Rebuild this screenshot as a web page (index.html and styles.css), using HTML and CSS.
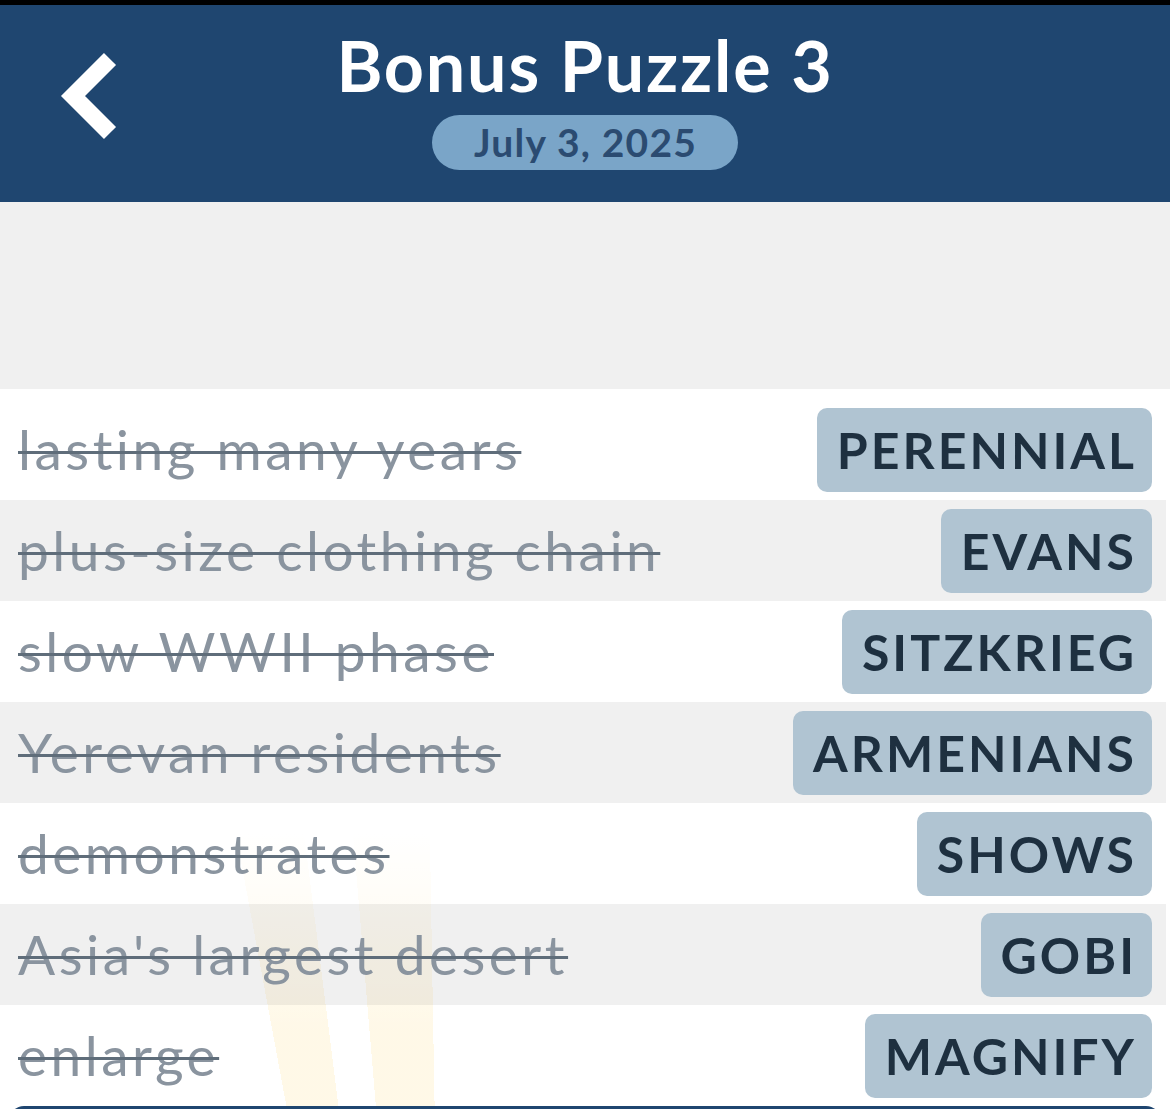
FILE: index.html
```html
<!DOCTYPE html>
<html>

<head>
    <meta charset="UTF-8">
    <title>Bonus Puzzle 3</title>
    <link rel="stylesheet" href="styles.css">
</head>

<body>
    <div class="statusbar"></div>

    <header class="topbar">
        <a class="back" href="#">
            <svg width="66" height="96" viewBox="0 0 66 96">
                <polyline points="58,11 21,48 58,85" fill="none" stroke="#fff" stroke-width="17" stroke-linejoin="miter" stroke-linecap="butt" />
            </svg>
        </a>
        <div class="heading">
            <h1 class="title">Bonus Puzzle 3</h1>
            <span class="date">July 3, 2025</span>
        </div>
        <div></div>
    </header>

    <div class="spacer"></div>

    <ul class="clues">
        <li class="clue"><span class="clue-text">lasting many years</span><span class="answer">PERENNIAL</span></li>
        <li class="clue"><span class="clue-text">plus-size clothing chain</span><span class="answer">EVANS</span></li>
        <li class="clue"><span class="clue-text">slow WWII phase</span><span class="answer">SITZKRIEG</span></li>
        <li class="clue"><span class="clue-text">Yerevan residents</span><span class="answer">ARMENIANS</span></li>
        <li class="clue"><span class="clue-text">demonstrates</span><span class="answer">SHOWS</span></li>
        <li class="clue"><span class="clue-text">Asia's largest desert</span><span class="answer">GOBI</span></li>
        <li class="clue"><span class="clue-text">enlarge</span><span class="answer">MAGNIFY</span></li>
    </ul>

    <div class="keyboard"></div>
</body>

</html>
```

FILE: styles.css
```css
body {
    margin: 0;
    background-color: #fff;
    font-family: Lato, "Liberation Sans", sans-serif;
    overflow: hidden;
}

.statusbar {
    height: 5px;
    background-color: #000;
}

.topbar {
    display: grid;
    grid-template-columns: 1fr auto 1fr;
    height: 197px;
    background-color: #1f4670;
}

.back {
    align-self: start;
    margin-top: 43px;
    margin-left: 52px;
    width: 66px;
}

.back svg {
    display: block;
}

.heading {
    display: flex;
    flex-direction: column;
    align-items: center;
    padding-top: 25px;
}

.title {
    margin: 0;
    color: #fff;
    font-size: 70px;
    font-weight: 700;
    line-height: 70px;
    letter-spacing: 1.8px;
}

.date {
    margin-top: 15px;
    height: 55px;
    padding: 0 41px 0 42px;
    border-radius: 28px;
    background-color: #7aa5c8;
    color: #2b4b71;
    font-size: 39px;
    font-weight: 700;
    line-height: 55px;
    letter-spacing: 1.2px;
}

.spacer {
    height: 187px;
    background-color: #f0f0f0;
}

.clues {
    list-style: none;
    margin: 0;
    padding: 10px 4px 0 0;
    background:
        linear-gradient(#fff 0, #fff 62%, rgba(255, 255, 255, 0) 90%),
        conic-gradient(from 0deg at 450px 1600px,
            transparent 0deg 349.5deg,
            rgba(255, 205, 70, 0.13) 349.5deg 352.8deg,
            transparent 352.8deg 355.2deg,
            rgba(255, 205, 70, 0.13) 355.2deg 359deg,
            transparent 359deg),
        #fff;
}

.clue {
    display: flex;
    align-items: center;
    justify-content: space-between;
    height: 101px;
    padding: 0 14px 0 18px;
}

.clue:nth-child(even) {
    background-color: rgba(0, 0, 0, 0.06);
}

.clue-text {
    color: #8a949f;
    font-size: 55px;
    line-height: 101px;
    letter-spacing: 3.5px;
    text-decoration: line-through;
    text-decoration-color: #5f6d7a;
    text-decoration-thickness: 3px;
}

.answer {
    height: 84px;
    padding: 0 15px 0 20px;
    border-radius: 10px;
    background-color: #b0c4d2;
    color: #1e3040;
    font-size: 50px;
    font-weight: 700;
    line-height: 84px;
    letter-spacing: 3px;
}

.keyboard {
    height: 40px;
    margin: 0 10px;
    border-radius: 14px 14px 0 0;
    background-color: #1f4670;
}
```
